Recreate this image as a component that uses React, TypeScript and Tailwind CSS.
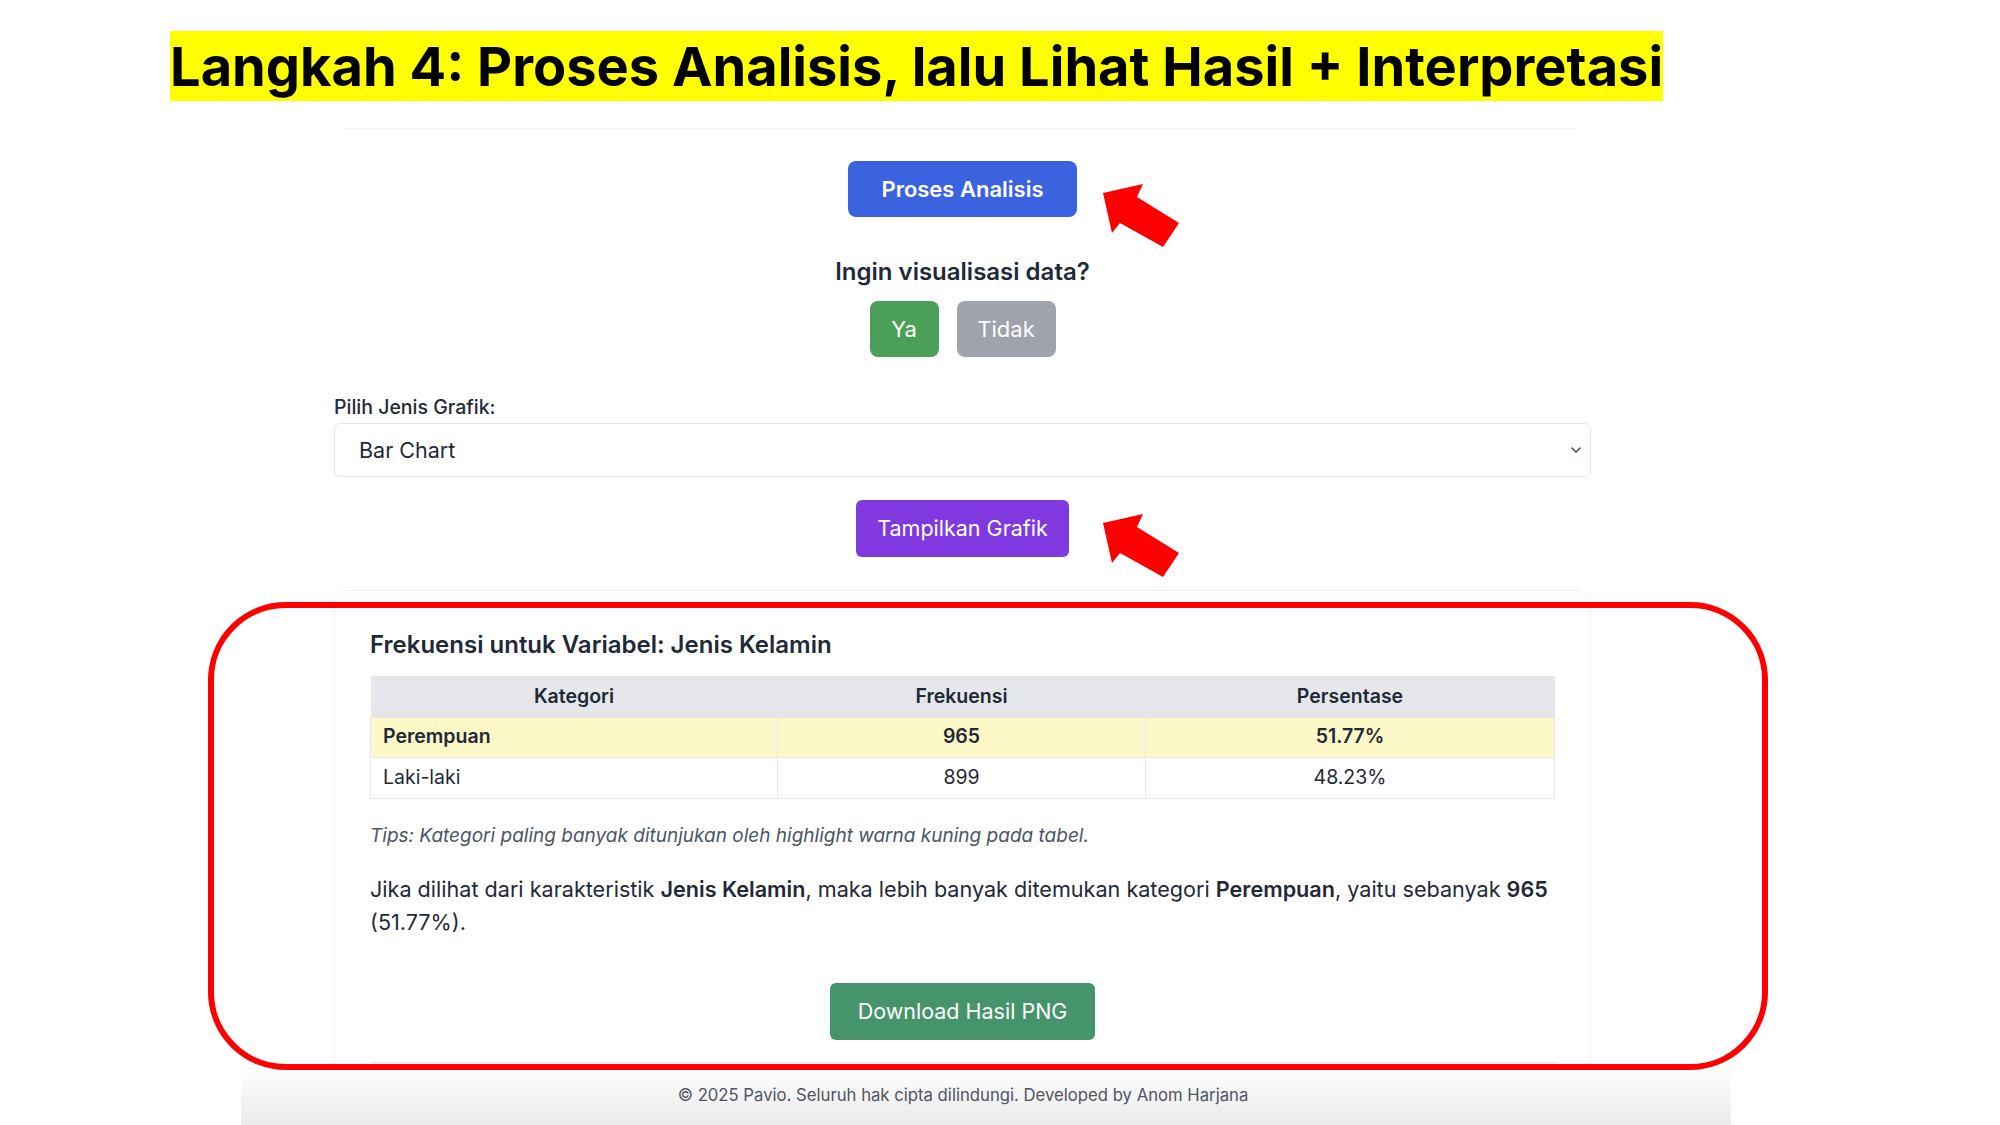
import { ChevronDown } from "lucide-react";

function Arrow({ className }: { className: string }) {
  return (
    <svg className={className} viewBox="0 0 80 66" fill="#ff0000">
      <polygon points="0,9 40,0 34,13 76,39 60,63 17,39 9,49" />
    </svg>
  );
}

const rows = [
  { kat: "Perempuan", frek: "965", pct: "51.77%", top: true },
  { kat: "Laki-laki", frek: "899", pct: "48.23%", top: false },
];

export default function App() {
  return (
    <div className="relative w-[2000px] h-[1125px] overflow-hidden bg-white font-['Inter','Liberation_Sans',sans-serif] text-[#1f2937]">
      <div className="pl-[170px] pt-[31px]">
        <h1 className="inline-block h-[70px] bg-[#ffff00] text-[54.2px] font-bold leading-[70px] text-black whitespace-nowrap">
          Langkah 4: Proses Analisis, lalu Lihat Hasil + Interpretasi
        </h1>
      </div>

      <div className="ml-[344px] mt-[27px] h-px w-[1233px] bg-[#f3f4f6]" />

      <div className="ml-[334px] w-[1257px] flex flex-col items-center">
        <button className="mt-[32px] h-[56px] w-[229px] rounded-lg bg-[#3b63e0] text-[22px] font-semibold text-white">
          Proses Analisis
        </button>

        <p className="mt-[40px] text-[24px] leading-[30px] font-semibold text-[#1f2937]">
          Ingin visualisasi data?
        </p>

        <div className="mt-[14px] flex gap-[18px]">
          <button className="h-[56px] w-[69px] rounded-lg bg-[#4c9f58] text-[22px] text-white">Ya</button>
          <button className="h-[56px] w-[99px] rounded-lg bg-[#9ea3ad] text-[22px] text-white">Tidak</button>
        </div>

        <div className="mt-[38px] w-full">
          <label className="block text-[19.5px] leading-[24px] font-medium text-[#1f2937]">
            Pilih Jenis Grafik:
          </label>
          <div className="mt-[4px] flex h-[54px] items-center justify-between rounded-md border border-[#e5e7eb] pl-[24px] pr-[6px] text-[21.5px] text-[#1f2937]">
            <span>Bar Chart</span>
            <ChevronDown className="h-[16px] w-[16px] text-[#374151]" strokeWidth={2} />
          </div>
        </div>

        <button className="mt-[23px] h-[57px] w-[213px] rounded-md bg-[#8039df] text-[21.5px] text-white">
          Tampilkan Grafik
        </button>

        <div className="mt-[33px] h-[560px] w-full rounded-xl border border-[#f1f2f4] px-[35px] pt-[39px]">
          <h2 className="text-[24px] leading-[30px] font-semibold text-[#1f2937]">
            Frekuensi untuk Variabel: Jenis Kelamin
          </h2>

          <table className="mt-[16px] w-full table-fixed border-collapse text-[19.5px]">
            <colgroup>
              <col className="w-[407px]" />
              <col className="w-[368px]" />
              <col />
            </colgroup>
            <thead>
              <tr className="h-[41px] bg-[#e5e7eb]">
                <th className="font-semibold text-center">Kategori</th>
                <th className="font-semibold text-center">Frekuensi</th>
                <th className="font-semibold text-center">Persentase</th>
              </tr>
            </thead>
            <tbody>
              {rows.map((r) => (
                <tr
                  key={r.kat}
                  className={r.top ? "h-[40px] bg-[#fdf8c8] font-semibold" : "h-[41px] bg-white"}
                >
                  <td className="border border-[#e5e7eb] pl-[12px]">{r.kat}</td>
                  <td className="border border-[#e5e7eb] text-center">{r.frek}</td>
                  <td className="border border-[#e5e7eb] text-center">{r.pct}</td>
                </tr>
              ))}
            </tbody>
          </table>

          <p className="mt-[23px] text-[19px] leading-[28px] italic text-[#4b5563]">
            Tips: Kategori paling banyak ditunjukan oleh highlight warna kuning pada tabel.
          </p>

          <p className="mt-[23px] text-[21.6px] leading-[33px] text-[#1f2937]">
            Jika dilihat dari karakteristik <b className="font-semibold">Jenis Kelamin</b>, maka lebih banyak ditemukan
            kategori <b className="font-semibold">Perempuan</b>, yaitu sebanyak <b className="font-semibold">965</b>
            <br />
            (51.77%).
          </p>

          <div className="mt-[44px] flex justify-center">
            <button className="h-[57px] w-[265px] rounded-md bg-[#45946b] text-[21.5px] text-white">
              Download Hasil PNG
            </button>
          </div>

          <div className="mt-[22px] h-px bg-[#e5e7eb]" />
        </div>
      </div>

      {/* footer */}
      <div className="absolute bottom-0 left-[241px] top-[1066px] flex w-[1490px] items-center justify-center bg-gradient-to-b from-white/80 to-[#e8e8e8]/90 pr-[46px] text-[16.7px] text-[#4b5563]">
        © 2025 Pavio. Seluruh hak cipta dilindungi. Developed by Anom Harjana
      </div>

      {/* annotations */}
      <Arrow className="absolute left-[1103px] top-[184px] w-[80px] h-[66px]" />
      <Arrow className="absolute left-[1103px] top-[514px] w-[80px] h-[66px]" />
      <div className="absolute left-[208px] top-[602px] h-[468px] w-[1560px] rounded-[78px] border-[6px] border-[#ff0000]" />
    </div>
  );
}
